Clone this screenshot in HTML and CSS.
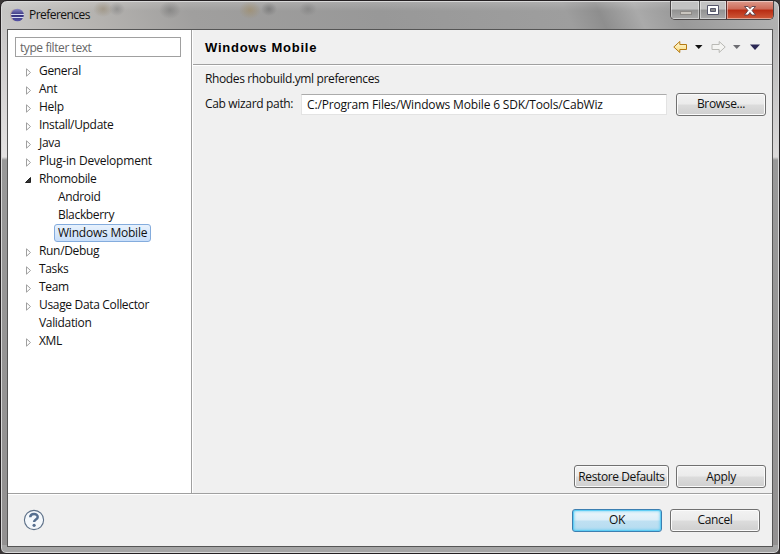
FILE: index.html
```html
<!DOCTYPE html>
<html lang="en">
<head>
<meta charset="utf-8">
<title>Preferences</title>
<link rel="stylesheet" href="styles.css">
</head>
<body>
<div class="window">
  <header class="titlebar">
    <svg class="logo" width="15" height="14" viewBox="0 0 15 14">
      <defs><linearGradient id="orb" x1="0" y1="0" x2="0" y2="1"><stop offset="0" stop-color="#8d8cc8"/><stop offset=".5" stop-color="#34307c"/><stop offset="1" stop-color="#5654a8"/></linearGradient></defs>
      <ellipse cx="5" cy="7" rx="5" ry="6" fill="#b9a6a2"/>
      <circle cx="7.500" cy="7" r="6.300" fill="url(#orb)"/>
      <path d="M1 6.500h13M1.500 9.500h12" stroke="#d5d9f0"/>
    </svg>
    <span class="caption">Preferences</span>
    <div class="controls">
      <span class="ctl min"><svg width="28" height="18"><rect x="9.500" y="10.500" width="11" height="3" fill="#c9c5bf" stroke="#8d8a87"/></svg></span>
      <span class="ctl max"><svg width="27" height="18"><path d="M7.500 4.500h11v9h-11z" fill="#fff" stroke="#55566a"/><path d="M10.500 7.500h5v3h-5z" fill="#888" stroke="#55566a"/></svg></span>
      <span class="ctl close"><svg width="47" height="18"><path d="M17.500 5.500h3.600l1.900 2.200 1.900-2.200h3.600l-3.500 4 3.500 4.500h-3.700l-1.800-2.500-1.800 2.500h-3.700l3.500-4.500z" fill="#fff" stroke="#5a4048" stroke-width=".9"/></svg></span>
    </div>
  </header>
  <main class="client">
    <div class="panes">
      <aside class="side">
        <input class="filter" placeholder="type filter text">
        <ul class="tree">
          <li><svg class="arrow" viewBox="0 0 7 9"><path d="M1.500 .8v7.400l4-3.700z"/></svg><span>General</span></li>
          <li><svg class="arrow" viewBox="0 0 7 9"><path d="M1.500 .8v7.400l4-3.700z"/></svg><span>Ant</span></li>
          <li><svg class="arrow" viewBox="0 0 7 9"><path d="M1.500 .8v7.400l4-3.700z"/></svg><span>Help</span></li>
          <li><svg class="arrow" viewBox="0 0 7 9"><path d="M1.500 .8v7.400l4-3.700z"/></svg><span>Install/Update</span></li>
          <li><svg class="arrow" viewBox="0 0 7 9"><path d="M1.500 .8v7.400l4-3.700z"/></svg><span>Java</span></li>
          <li><svg class="arrow" viewBox="0 0 7 9"><path d="M1.500 .8v7.400l4-3.700z"/></svg><span class="wide">Plug-in Development</span></li>
          <li><svg class="arrow open" viewBox="0 0 7 9"><path d="M5.500 1.500v5h-5z"/></svg><span>Rhomobile</span></li>
          <li class="child"><span>Android</span></li>
          <li class="child"><span>Blackberry</span></li>
          <li class="child"><span class="selected">Windows Mobile</span></li>
          <li><svg class="arrow" viewBox="0 0 7 9"><path d="M1.500 .8v7.400l4-3.700z"/></svg><span>Run/Debug</span></li>
          <li><svg class="arrow" viewBox="0 0 7 9"><path d="M1.500 .8v7.400l4-3.700z"/></svg><span>Tasks</span></li>
          <li><svg class="arrow" viewBox="0 0 7 9"><path d="M1.500 .8v7.400l4-3.700z"/></svg><span>Team</span></li>
          <li><svg class="arrow" viewBox="0 0 7 9"><path d="M1.500 .8v7.400l4-3.700z"/></svg><span>Usage Data Collector</span></li>
          <li class="leaf"><span>Validation</span></li>
          <li><svg class="arrow" viewBox="0 0 7 9"><path d="M1.500 .8v7.400l4-3.700z"/></svg><span>XML</span></li>
        </ul>
      </aside>
      <section class="page">
        <div class="heading">
          <h1>Windows Mobile</h1>
          <svg class="nav" width="90" height="14" viewBox="0 0 90 14">
            <defs><linearGradient id="gold" x1="0" y1="0" x2="0" y2="1"><stop offset="0" stop-color="#fffbe0"/><stop offset="1" stop-color="#f8d878"/></linearGradient></defs>
            <path d="M.8 7l6-5.500v3h6.700v5H6.800v3z" fill="url(#gold)" stroke="#b57a12"/>
            <path d="M22 5h7.500l-3.750 4z" fill="#111"/>
            <path d="M52.200 7l-6-5.500v3h-7.200v5h7.200v3z" fill="#f4f4f2" stroke="#b9b9b5"/>
            <path d="M60 5h7.500l-3.750 4z" fill="#6d6d72"/>
            <path d="M77 4.500h10L82 10z" fill="#2b2855"/>
          </svg>
        </div>
        <div class="body">
          <p class="desc">Rhodes rhobuild.yml preferences</p>
          <div class="field">
            <label for="cab">Cab wizard path:</label>
            <input id="cab" class="path" value="C:/Program Files/Windows Mobile 6 SDK/Tools/CabWiz">
            <button class="btn">Browse...</button>
          </div>
          <div class="actions">
            <button class="btn restore">Restore Defaults</button>
            <button class="btn">Apply</button>
          </div>
        </div>
      </section>
    </div>
    <footer class="footer">
      <svg class="help" width="22" height="22" viewBox="0 0 22 22"><circle cx="11" cy="11" r="9.600" fill="#f4f8fc" stroke="#5d7088" stroke-width="1.100"/><path d="M7.200 8.200C7.400 4 14.700 4 14.700 7.900c0 2.600-3.600 2.600-3.600 5.100" fill="none" stroke="#566f90" stroke-width="2.500"/><circle cx="11.100" cy="16.300" r="1.600" fill="#566f90"/></svg>
      <button class="btn ok">OK</button>
      <button class="btn">Cancel</button>
    </footer>
  </main>
</div>
</body>
</html>
```
FILE: styles.css
```css
* { box-sizing: border-box; }
body {
  margin: 0;
  background: #3a3636;
  color: #111;
  font: 12px/18px "Open Sans", "Noto Sans", sans-serif;
  letter-spacing: -0.33px;
}
button, input { font: inherit; letter-spacing: inherit; color: inherit; }
.window {
  width: 780px;
  height: 554px;
  padding: 0 6px 6px;
  border: 1px solid #242022;
  border-radius: 7px 7px 6px 6px;
  box-shadow: inset 0 0 0 1px #d8d8d8;
  background:
    radial-gradient(closest-side, #94866e90, #94866e00) 92px 0 / 20px 16px no-repeat,
    radial-gradient(closest-side, #77777780, #77777700) 108px 1px / 16px 14px no-repeat,
    radial-gradient(closest-side, #6d6d6d80, #6d6d6d00) 158px 0 / 22px 18px no-repeat,
    radial-gradient(closest-side, #a08a6090, #a08a6000) 238px 0 / 22px 18px no-repeat,
    radial-gradient(closest-side, #66666690, #66666600) 260px 1px / 16px 14px no-repeat,
    radial-gradient(closest-side, #70707070, #70707000) 298px 1px / 18px 14px no-repeat,
    linear-gradient(#a5a5a5 0 0) 0 100% / 100% 8px no-repeat,
    linear-gradient(#c9c7c7 0, #e4e2e2 127px, #999 130px, #929090 100%) 0 29px / 8px 100% no-repeat,
    linear-gradient(#b5b5b5 0, #dcdada 127px, #999 130px, #929090 100%) 100% 29px / 8px 100% no-repeat,
    linear-gradient(#ffffff30, #ffffff00 10px) no-repeat,
    linear-gradient(65deg, #c8c7c6 0, #b5b3b0 90px, #a09f9e 180px, #989898 350px, #9e9e9e 520px, #8e8e8e 550px, #aaa 585px, #999 620px, #b4b4b4 100%) 0 0 / 100% 30px no-repeat;
}
.titlebar { height: 28px; display: flex; align-items: flex-start; }
.logo { margin: 7px 0 0 3px; }
.caption { margin: 5px auto 0 4px; letter-spacing: -0.55px; }
.controls {
  display: flex;
  width: 104px;
  height: 19px;
  margin-right: -1px;
  border: 1px solid #494647;
  border-top: 0;
  border-radius: 0 0 5px 5px;
  overflow: hidden;
}
.ctl { height: 18px; box-shadow: inset 0 0 0 1px #ffffff70; background: linear-gradient(#c2c2c2 0 45%, #929292 50%, #aaa); }
.ctl svg { display: block; }
.min { width: 28px; }
.max { width: 27px; border-left: 1px solid #555; }
.close { flex: 1; border-left: 1px solid #5b3030; background: linear-gradient(#dd9a8c 0, #cd6a58 45%, #b82b12 50%, #cf5a3a); }
.client { height: 518px; border: 1px solid #555; background: #f0f0f0; }
.panes { display: flex; height: 464px; border-bottom: 1px solid #a0a0a0; }
.side { width: 184px; background: #fff; border-right: 1px solid #a0a0a0; padding: 7px; }
.filter { display: block; width: 166px; height: 20px; padding: 0 4px; border: 1px solid #a0a0a0; background: #fff; letter-spacing: -0.42px; }
.filter::placeholder { color: #666; opacity: 1; }
.tree { list-style: none; margin: 5px 0 0; padding: 0 0 0 10px; }
.tree li { display: flex; height: 18px; align-items: center; white-space: nowrap; }
.arrow { width: 7px; height: 9px; margin: 2px 7px 0 0; fill: #fff; stroke: #a0a0a0; }
.open { fill: #333; stroke: #222; }
.wide { letter-spacing: -0.2px; }
.tree .leaf { padding-left: 14px; }
.tree .child { padding-left: 33px; }
.selected { margin-left: -4px; padding: 0 3px; height: 18px; line-height: 16px; letter-spacing: -0.22px; border: 1px solid #84acdd; border-radius: 3px; background: linear-gradient(#e8f2fd, #c8defa); }
.page { flex: 1; display: flex; flex-direction: column; border-left: 1px solid #fff; }
.heading { display: flex; justify-content: space-between; align-items: center; height: 35px; padding: 2px 9px 0 12px; border-bottom: 1px solid #a0a0a0; box-shadow: 0 1px #fff; }
h1 { margin: 0; font: bold 13px/18px "Liberation Sans", sans-serif; letter-spacing: 0.75px; color: #000; }
.nav { margin-top: -2px; }
.body { flex: 1; display: flex; flex-direction: column; padding: 5px 6px 5px 12px; }
.desc { margin: 0; letter-spacing: -0.37px; }
.field { display: flex; align-items: center; margin-top: 4px; height: 24px; }
.field label { width: 96px; }
.path { width: 366px; height: 21px; padding: 0 5px; border: 1px solid #e3e3e3; border-top-color: #ababab; background: #fff; letter-spacing: -0.16px; }
.btn { width: 90px; height: 23px; padding: 0; text-align: center; line-height: 20px; border: 1px solid #707070; border-radius: 3px; box-shadow: inset 0 0 0 1px #fbfbfb; background: linear-gradient(#f2f2f2 0, #ebebeb 48%, #dcdcdc 52%, #cfcfcf); }
.field .btn { margin-left: auto; }
.actions { display: flex; justify-content: flex-end; gap: 7px; margin-top: auto; }
.actions .restore { width: 95px; letter-spacing: -0.4px; }
.footer { display: flex; height: 52px; align-items: center; gap: 8px; padding: 0 12px 0 15px; box-shadow: inset 0 1px #fff; }
.help { margin-right: auto; }
.ok { border-color: #3c7fb1; box-shadow: inset 0 0 0 1px #5fcdf4, inset 0 0 3px 1px #5fcdf4; background: linear-gradient(#eef6fa 0, #dceef8 48%, #bfe0f2 52%, #b5dcf0); }
```
